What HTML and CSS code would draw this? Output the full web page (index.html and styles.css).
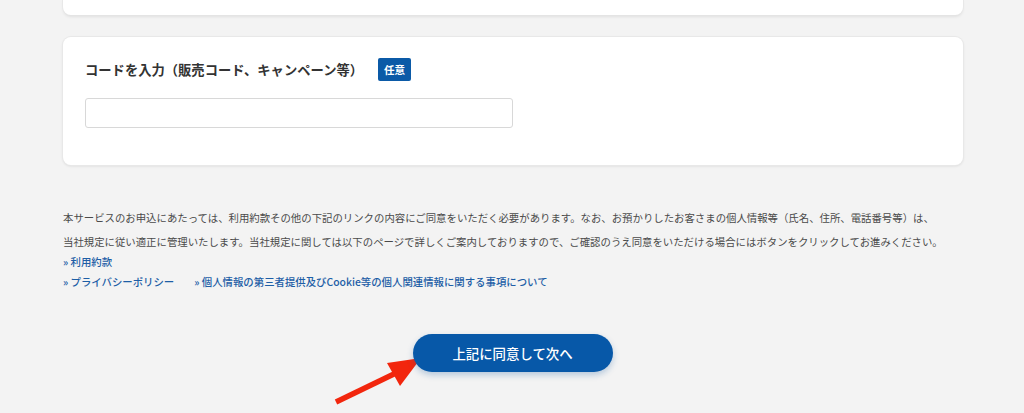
FILE: index.html
```html
<!DOCTYPE html>
<html lang="ja">
<head>
<meta charset="utf-8">
<title>コード入力</title>
<link rel="stylesheet" href="styles.css">
</head>
<body>
<div class="page">
  <div class="card card-stub"></div>
  <div class="card card-code">
    <div class="field-head">
      <span class="field-title">コードを入力（販売コード、キャンペーン等）</span>
      <span class="badge">任意</span>
    </div>
    <input class="code-input" type="text" aria-label="コード">
  </div>
  <div class="notice">
    <p class="notice-text">本サービスのお申込にあたっては、利用約款その他の下記のリンクの内容にご同意をいただく必要があります。なお、お預かりしたお客さまの個人情報等（氏名、住所、電話番号等）は、<br>当社規定に従い適正に管理いたします。当社規定に関しては以下のページで詳しくご案内しておりますので、ご確認のうえ同意をいただける場合にはボタンをクリックしてお進みください。</p>
    <div class="links">
      <a class="link" href="#">» 利用約款</a>
    </div>
    <div class="links">
      <a class="link" href="#">» プライバシーポリシー</a>
      <a class="link" href="#">» 個人情報の第三者提供及びCookie等の個人関連情報に関する事項について</a>
    </div>
  </div>
  <div class="actions">
    <button class="btn-next" type="button">上記に同意して次へ</button>
  </div>
</div>
<svg class="arrow" width="1024" height="413" viewBox="0 0 1024 413" aria-hidden="true">
  <line x1="336" y1="402" x2="396" y2="373" stroke="#f2260d" stroke-width="5.5" stroke-linecap="butt"/>
  <polygon points="387,363 421,358 400,386" fill="#f2260d"/>
</svg>
</body>
</html>
```
FILE: styles.css
```css
html, body {
  margin: 0;
  padding: 0;
}
body {
  background: #f3f3f3;
  font-family: "Noto Sans CJK JP", "Noto Sans", sans-serif;
  color: #333;
  width: 1024px;
  height: 413px;
  overflow: hidden;
  position: relative;
}
.page {
  width: 900px;
  margin-left: 63px;
}
.card {
  background: #fff;
  border-radius: 8px;
  box-shadow: 0 0 0 1px #e8e8e8, 0 1px 3px rgba(0,0,0,0.12);
}
.card-stub {
  height: 15px;
  border-top-left-radius: 0;
  border-top-right-radius: 0;
  box-shadow: 1px 0 0 #e8e8e8, -1px 0 0 #e8e8e8, 0 1px 0 #e4e4e4, 0 2px 3px rgba(0,0,0,0.08);
}
.card-code {
  margin-top: 22px;
  height: 128px;
  box-sizing: border-box;
  padding: 21px 22px 0;
}
.field-head {
  display: flex;
  align-items: center;
  gap: 15px;
  height: 23px;
}
.field-title {
  font-size: 13.3px;
  font-weight: bold;
  color: #333;
}
.badge {
  display: inline-flex;
  align-items: center;
  justify-content: center;
  width: 33px;
  height: 23px;
  background: #0b5aa7;
  color: #fff;
  font-size: 10.5px;
  font-weight: bold;
  border-radius: 2px;
}
.code-input {
  display: block;
  margin-top: 17px;
  width: 428px;
  height: 30px;
  box-sizing: border-box;
  border: 1px solid #d8d8d8;
  border-radius: 3px;
  background: #fff;
  padding: 0 8px;
}
.notice {
  margin-top: 41px;
  font-size: 10.4px;
  color: #4a4a4a;
}
.notice-text {
  margin: 0 0 -2px;
  line-height: 24px;
}
.links {
  display: flex;
  gap: 20px;
  line-height: 20px;
}
.link {
  color: #1d5ea6;
  text-decoration: none;
  font-weight: 500;
}
.actions {
  display: flex;
  justify-content: center;
  margin-top: 42px;
  padding-right: 1px;
}
.btn-next {
  position: relative;
  z-index: 1;
  width: 200px;
  height: 38px;
  border: none;
  border-radius: 19px;
  background: #0758a8;
  color: #fff;
  font-family: "Noto Sans CJK JP", sans-serif;
  font-size: 13.4px;
  font-weight: 500;
  box-shadow: 0 3px 6px rgba(20, 90, 160, 0.28);
  cursor: pointer;
}
.arrow {
  position: absolute;
  left: 0;
  top: 0;
  pointer-events: none;
}
```
